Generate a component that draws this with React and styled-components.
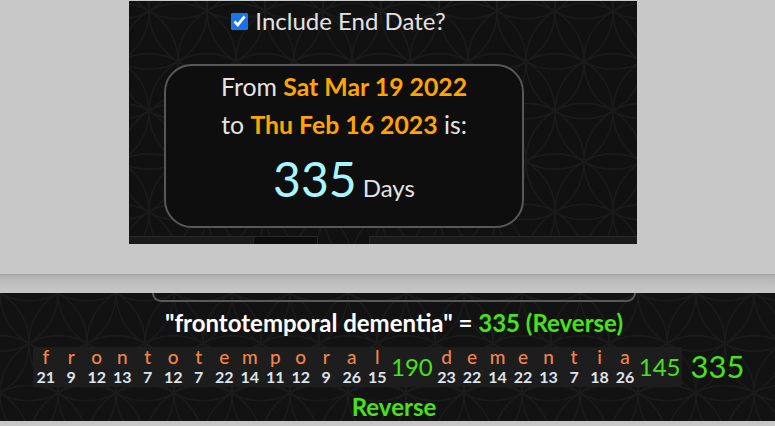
import React from "react";
import styled, { createGlobalStyle } from "styled-components";

const R = 58;
const buildPattern = () => {
  const W = R;
  const H = R * Math.sqrt(3);
  const circles = [];
  for (let j = -3; j <= 5; j++) {
    for (let i = -4; i <= 4; i++) {
      const x = i * R + (j * R) / 2;
      const y = (j * R * Math.sqrt(3)) / 2;
      if (x >= -R - 1 && x <= W + R + 1 && y >= -R - 1 && y <= H + R + 1) {
        circles.push(
          `<circle cx="${x.toFixed(2)}" cy="${y.toFixed(2)}" r="${R}" fill="none" stroke="#1b1b1b" stroke-width="1.4"/>`
        );
      }
    }
  }
  const svg = `<svg xmlns="http://www.w3.org/2000/svg" width="${W}" height="${H.toFixed(2)}" viewBox="0 0 ${W} ${H.toFixed(2)}">${circles.join("")}</svg>`;
  return `url("data:image/svg+xml,${encodeURIComponent(svg)}")`;
};
const pattern = buildPattern();

const Global = createGlobalStyle`
  html, body { margin: 0; padding: 0; background: #c8c8c8; }
  body { font-family: Lato, "Open Sans", sans-serif; width: 775px; height: 426px; overflow: hidden; }
`;

const Page = styled.div`
  display: flex;
  flex-direction: column;
`;

const TopPanel = styled.section`
  margin-left: 129px;
  width: 508px;
  height: 243px;
  margin-top: 1px;
  background-color: #111;
  background-image: ${pattern};
  background-position: 20px 10px;
  display: flex;
  flex-direction: column;
`;

const Column = styled.div`
  width: 430px;
  display: flex;
  flex-direction: column;
  align-items: center;
  padding-top: 7px;
`;

const CheckRow = styled.label`
  display: flex;
  align-items: center;
  gap: 7px;
  margin-left: -11px;
  font-size: 24px;
  line-height: 26px;
  color: #e2e2e2;
`;

const Check = styled.input`
  width: 17px;
  height: 17px;
  margin: 0;
  accent-color: #1a73e8;
`;

const ResultBox = styled.div`
  margin-top: 30px;
  width: 360px;
  box-sizing: border-box;
  border: 2px solid #585858;
  border-radius: 28px;
  background: #0e0e0e;
  padding: 2px 0 3px;
  text-align: center;
  color: #e4e4e4;
`;

const Line = styled.div`
  font-size: 24.8px;
  line-height: 38px;
`;

const DateText = styled.b`
  color: #ffa500;
  font-weight: 700;
`;

const BigLine = styled.div`
  line-height: 70px;
  font-size: 24px;
`;

const BigNum = styled.span`
  font-size: 48px;
  color: #aaf6ff;
`;

const Tabs = styled.div`
  margin-top: auto;
  height: 8px;
  display: flex;
`;

const Tab = styled.div`
  box-sizing: border-box;
  width: ${(p) => p.$w || "auto"};
  flex: ${(p) => (p.$grow ? 1 : "none")};
  background: ${(p) => (p.$dark ? "#0d0d0d" : p.$clear ? "transparent" : "#1a1a1a")};
  border-top: ${(p) => (p.$clear ? "none" : "1px solid #2a2a2a")};
  border-left: ${(p) => (p.$dark || p.$grow ? "1px solid #262626" : "none")};
  border-right: ${(p) => (p.$dark ? "1px solid #262626" : "none")};
`;

const Gap = styled.div`
  height: 30px;
`;

const Shadow = styled.div`
  height: 19px;
  background: linear-gradient(#a3a3a3 0px, #b4b4b4 3px, #c2c2c2 12px, #c6c6c6 19px);
`;

const Band = styled.section`
  height: 128px;
  background-color: #121212;
  background-image: ${pattern};
  background-position: 0px 0px;
  display: flex;
  flex-direction: column;
`;

const CardBottom = styled.div`
  margin-left: 152px;
  width: 484px;
  height: 9px;
  box-sizing: border-box;
  border: 2px solid #585858;
  border-top: none;
  border-radius: 0 0 14px 14px;
`;

const Title = styled.div`
  padding-left: 13px;
  text-align: center;
  font-size: 24px;
  font-weight: 700;
  line-height: 28px;
  margin-top: 7px;
  color: #fff;
`;

const Green = styled.span`
  color: #47e21b;
`;

const Cipher = styled.div`
  margin-top: 10px;
  margin-left: 33px;
  display: flex;
  align-items: stretch;
  height: 40px;
`;

const Word = styled.div`
  display: flex;
  background: #1d1d1d;
`;

const Cell = styled.div`
  width: 25.5px;
  display: flex;
  flex-direction: column;
  align-items: center;
`;

const Letter = styled.span`
  font-size: 19px;
  line-height: 19px;
  color: #f0864a;
  font-weight: 500;
`;

const Num = styled.span`
  font-size: 16px;
  line-height: 21px;
  font-weight: 700;
  color: #dfe3ea;
`;

const Sum = styled.div`
  display: flex;
  align-items: center;
  padding: 0 1px 2px;
  background: ${(p) => (p.$plain ? "transparent" : "#1d1d1d")};
  margin-left: ${(p) => (p.$plain ? "8px" : "0")};
  font-size: ${(p) => (p.$plain ? "31px" : "24px")};
  color: #47e21b;
`;

const Footer = styled.div`
  padding-left: 13px;
  text-align: center;
  font-size: 24px;
  font-weight: 700;
  line-height: 26px;
  margin-top: 7px;
  color: #47e21b;
`;

const w1 = "frontotemporal".split("");
const n1 = [21, 9, 12, 13, 7, 12, 7, 22, 14, 11, 12, 9, 26, 15];
const w2 = "dementia".split("");
const n2 = [23, 22, 14, 22, 13, 7, 18, 26];

const WordBlock = ({ letters, nums }) => (
  <Word>
    {letters.map((l, i) => (
      <Cell key={i}>
        <Letter>{l}</Letter>
        <Num>{nums[i]}</Num>
      </Cell>
    ))}
  </Word>
);

export default function App() {
  return (
    <Page>
      <Global />
      <TopPanel>
        <Column>
          <CheckRow>
            <Check type="checkbox" defaultChecked />
            Include End Date?
          </CheckRow>
          <ResultBox>
            <Line>
              From <DateText>Sat Mar 19 2022</DateText>
            </Line>
            <Line>
              to <DateText>Thu Feb 16 2023</DateText> is:
            </Line>
            <BigLine>
              <BigNum>335</BigNum> Days
            </BigLine>
          </ResultBox>
        </Column>
        <Tabs>
          <Tab $w="124px" />
          <Tab $w="65px" $dark />
          <Tab $w="51px" $clear />
          <Tab $grow />
        </Tabs>
      </TopPanel>
      <Gap />
      <Shadow />
      <Band>
        <CardBottom />
        <Title>
          "frontotemporal dementia" = <Green>335 (Reverse)</Green>
        </Title>
        <Cipher>
          <WordBlock letters={w1} nums={n1} />
          <Sum>190</Sum>
          <WordBlock letters={w2} nums={n2} />
          <Sum>145</Sum>
          <Sum $plain>335</Sum>
        </Cipher>
        <Footer>Reverse</Footer>
      </Band>
    </Page>
  );
}
